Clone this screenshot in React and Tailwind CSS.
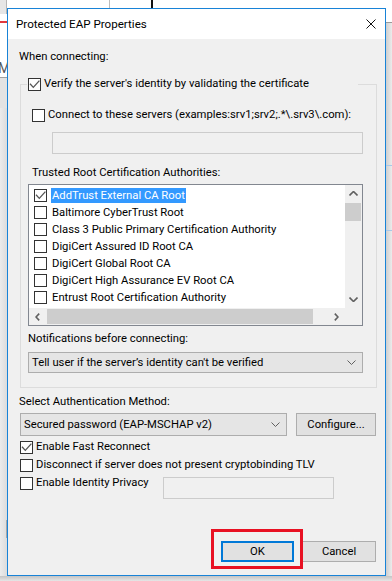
import React from 'react';

const certs = [
  { name: 'AddTrust External CA Root', checked: true, selected: true },
  { name: 'Baltimore CyberTrust Root' },
  { name: 'Class 3 Public Primary Certification Authority' },
  { name: 'DigiCert Assured ID Root CA' },
  { name: 'DigiCert Global Root CA' },
  { name: 'DigiCert High Assurance EV Root CA' },
  { name: 'Entrust Root Certification Authority' },
];

const CheckBox = ({ checked }) => (
  <span className="w-[13px] h-[13px] border border-[#333333] bg-white shrink-0 flex items-center justify-center">
    {checked && (
      <svg width="11" height="11" viewBox="0 0 11 11">
        <path d="M1 4.8 L4.3 8.4 L10.4 1.6" fill="none" stroke="#555555" strokeWidth="1.3" />
      </svg>
    )}
  </span>
);

const Chevron = ({ dir = 'down', color = '#606060', w = 9, h = 5, sw = 1 }) => {
  const paths = {
    down: `M0.5 0.5 L${w / 2} ${h - 0.5} L${w - 0.5} 0.5`,
    up: `M0.5 ${h - 0.5} L${w / 2} 0.5 L${w - 0.5} ${h - 0.5}`,
  };
  return (
    <svg width={w} height={h} viewBox={`0 0 ${w} ${h}`}>
      <path d={paths[dir]} fill="none" stroke={color} strokeWidth={sw} />
    </svg>
  );
};

const SideChevron = ({ dir }) => (
  <svg width="5" height="8" viewBox="0 0 5 8">
    <path
      d={dir === 'left' ? 'M4.2 0.6 L1 4 L4.2 7.4' : 'M0.8 0.6 L4 4 L0.8 7.4'}
      fill="none"
      stroke="#606060"
      strokeWidth="1.6"
    />
  </svg>
);

const Combo = ({ text, className }) => (
  <div className={`flex items-center justify-between border border-[#adadad] bg-[#e5e5e5] ${className}`}>
    <span className="pl-[3px] whitespace-nowrap">{text}</span>
    <span className="pr-[6px] flex items-center">
      <Chevron />
    </span>
  </div>
);

const CertList = () => (
  <div className="ml-[7px] mt-[3px] w-[335px] h-[142px] border border-[#828790] bg-white flex flex-col">
    <div className="flex flex-1 min-h-0">
      <div className="flex-1 pt-[2px] overflow-hidden">
        {certs.map((c) => (
          <div key={c.name} className="h-[17px] flex items-center pl-[5px]">
            <CheckBox checked={c.checked} />
            <span
              className={`ml-[4px] px-[1px] leading-[15px] whitespace-nowrap ${
                c.selected ? 'bg-[#3399ff] text-white' : ''
              }`}
            >
              {c.name}
            </span>
          </div>
        ))}
      </div>
      <div className="w-[17px] bg-[#f0f0f0] flex flex-col">
        <div className="h-[17px] flex items-center justify-center">
          <Chevron dir="up" w={9} h={5} sw={1.6} />
        </div>
        <div className="mt-[1px] h-[18px] mr-[1px] bg-[#cdcdcd]" />
        <div className="mt-auto h-[17px] flex items-center justify-center">
          <Chevron dir="down" w={9} h={5} sw={1.6} />
        </div>
      </div>
    </div>
    <div className="h-[17px] flex bg-[#f0f0f0]">
      <div className="w-[17px] flex items-center justify-center">
        <SideChevron dir="left" />
      </div>
      <div className="ml-[1px] w-[266px] my-[1px] bg-[#cdcdcd]" />
      <div className="w-[17px] ml-auto mr-[17px] flex items-center justify-center">
        <SideChevron dir="right" />
      </div>
    </div>
  </div>
);

const App = () => {
  return (
    <div className="relative w-[392px] h-[581px] overflow-hidden bg-white text-black text-[11.25px] leading-[16px] font-['Roboto',sans-serif]">
      {/* desktop behind the dialog */}
      <div className="absolute left-0 top-0 w-[7px] h-[14px] bg-[#e6e6e6] border-r border-[#b5b5b5]" />
      <div className="absolute left-0 top-[21px] w-[7px] h-[2px] bg-[#e0393e]" />
      <div className="absolute left-[-2px] top-[60px] text-[14px] leading-[16px] text-[#555555]">M</div>
      <div className="absolute left-0 top-[77px] w-[7px] h-[1px] bg-[#a0a0a0]" />
      <div className="absolute left-0 top-[78px] w-[7px] h-[30px] bg-[#e3e3e3]" />
      <div className="absolute left-0 top-[108px] w-[7px] h-[473px] bg-gradient-to-r from-[#ececec] to-[#dcdcdc]" />
      <div className="absolute left-[6px] top-[520px] w-[1px] h-[18px] bg-[#a8a8a8]" />
      <div className="absolute left-[109px] top-0 w-[1px] h-[8px] bg-[#bdbdbd]" />
      <div className="absolute left-[151px] top-0 w-[2px] h-[8px] bg-[#111111]" />
      <div className="absolute left-[386px] top-[22px] w-[6px] h-[1px] bg-[#9a9a9a]" />
      <div className="absolute left-[386px] top-[23px] w-[6px] h-[558px] bg-gradient-to-r from-[#cfcfcf] to-[#ececec]" />
      <div className="absolute left-[386px] top-[165px] w-[6px] h-[1px] bg-[#a9c9e8]" />
      <div className="absolute left-[386px] top-[230px] w-[6px] h-[1px] bg-[#a9c9e8]" />
      <div className="absolute left-0 top-[576px] w-[392px] h-[5px] bg-gradient-to-b from-[#c4c4c4] to-[#e6e6e6]" />

      {/* dialog window */}
      <div className="absolute left-[7px] top-[8px] w-[379px] h-[568px] border border-[#1883d7] flex flex-col">
        <div className="h-[30px] bg-white flex items-center justify-between pl-[8px] pr-[9px]">
          <span className="whitespace-nowrap text-[11.6px]">Protected EAP Properties</span>
          <svg width="10" height="10" viewBox="0 0 10 10" className="mt-[-1px]">
            <path d="M0.5 0.5 L9.5 9.5 M9.5 0.5 L0.5 9.5" stroke="#111111" strokeWidth="1" />
          </svg>
        </div>

        <div className="flex-1 bg-[#f0f0f0] flex flex-col">
          <div className="pt-[10px] pl-[11px] whitespace-nowrap">When connecting:</div>

          {/* group box */}
          <div className="ml-[12px] mt-[19px] w-[357px] h-[304px] border border-[#dcdcdc] flex flex-col">
            <div className="-mt-[9px] ml-[6px] w-[331px] h-[16px] bg-[#f0f0f0] flex items-center pl-[1px]">
              <CheckBox checked />
              <span className="ml-[3px] whitespace-nowrap">
                Verify the server's identity by validating the certificate
              </span>
            </div>

            <div className="mt-[15px] ml-[11px] h-[16px] flex items-center">
              <CheckBox />
              <span className="ml-[3px] whitespace-nowrap">
                Connect to these servers (examples:srv1;srv2;.*\.srv3\.com):
              </span>
            </div>

            <div className="mt-[9px] ml-[31px] w-[311px] h-[22px] border border-[#cccccc] bg-[#f0f0f0]" />

            <div className="mt-[11px] ml-[11px] whitespace-nowrap">Trusted Root Certification Authorities:</div>

            <CertList />

            <div className="mt-[5px] ml-[7px] whitespace-nowrap">Notifications before connecting:</div>

            <Combo
              text="Tell user if the server’s identity can't be verified"
              className="mt-[5px] ml-[7px] w-[335px] h-[21px]"
            />
          </div>

          <div className="mt-[6px] pl-[11px] whitespace-nowrap">Select Authentication Method:</div>

          <div className="mt-[3px] ml-[12px] flex">
            <Combo text="Secured password (EAP-MSCHAP v2)" className="w-[267px] h-[23px]" />
            <button className="ml-[9px] w-[80px] h-[23px] border border-[#adadad] bg-[#e1e1e1] flex items-center justify-center">
              Configure...
            </button>
          </div>

          <div className="mt-[2px] ml-[12px] flex flex-col">
            <div className="h-[18px] flex items-center">
              <CheckBox checked />
              <span className="ml-[3px] whitespace-nowrap">Enable Fast Reconnect</span>
            </div>
            <div className="h-[18px] flex items-center">
              <CheckBox />
              <span className="ml-[3px] whitespace-nowrap">
                Disconnect if server does not present cryptobinding TLV
              </span>
            </div>
            <div className="flex items-start">
              <div className="w-[143px] h-[18px] flex items-center">
                <CheckBox />
                <span className="ml-[3px] whitespace-nowrap">Enable Identity Privacy</span>
              </div>
              <div className="mt-[3px] w-[171px] h-[22px] border border-[#cccccc] bg-[#f0f0f0]" />
            </div>
          </div>

          <div className="mt-auto pb-[13px] pr-[9px] flex justify-end">
            <div className="relative">
              <button className="w-[73px] h-[21px] border-2 border-[#0078d7] bg-[#e1e1e1] flex items-center justify-center">
                OK
              </button>
              <div className="absolute left-[-10px] top-[-12px] w-[92px] h-[40px] border-[3px] border-[#e81123] pointer-events-none" />
            </div>
            <button className="ml-[8px] w-[74px] h-[21px] border border-[#adadad] bg-[#e1e1e1] flex items-center justify-center">
              Cancel
            </button>
          </div>
        </div>
      </div>
    </div>
  );
};

export default App;
